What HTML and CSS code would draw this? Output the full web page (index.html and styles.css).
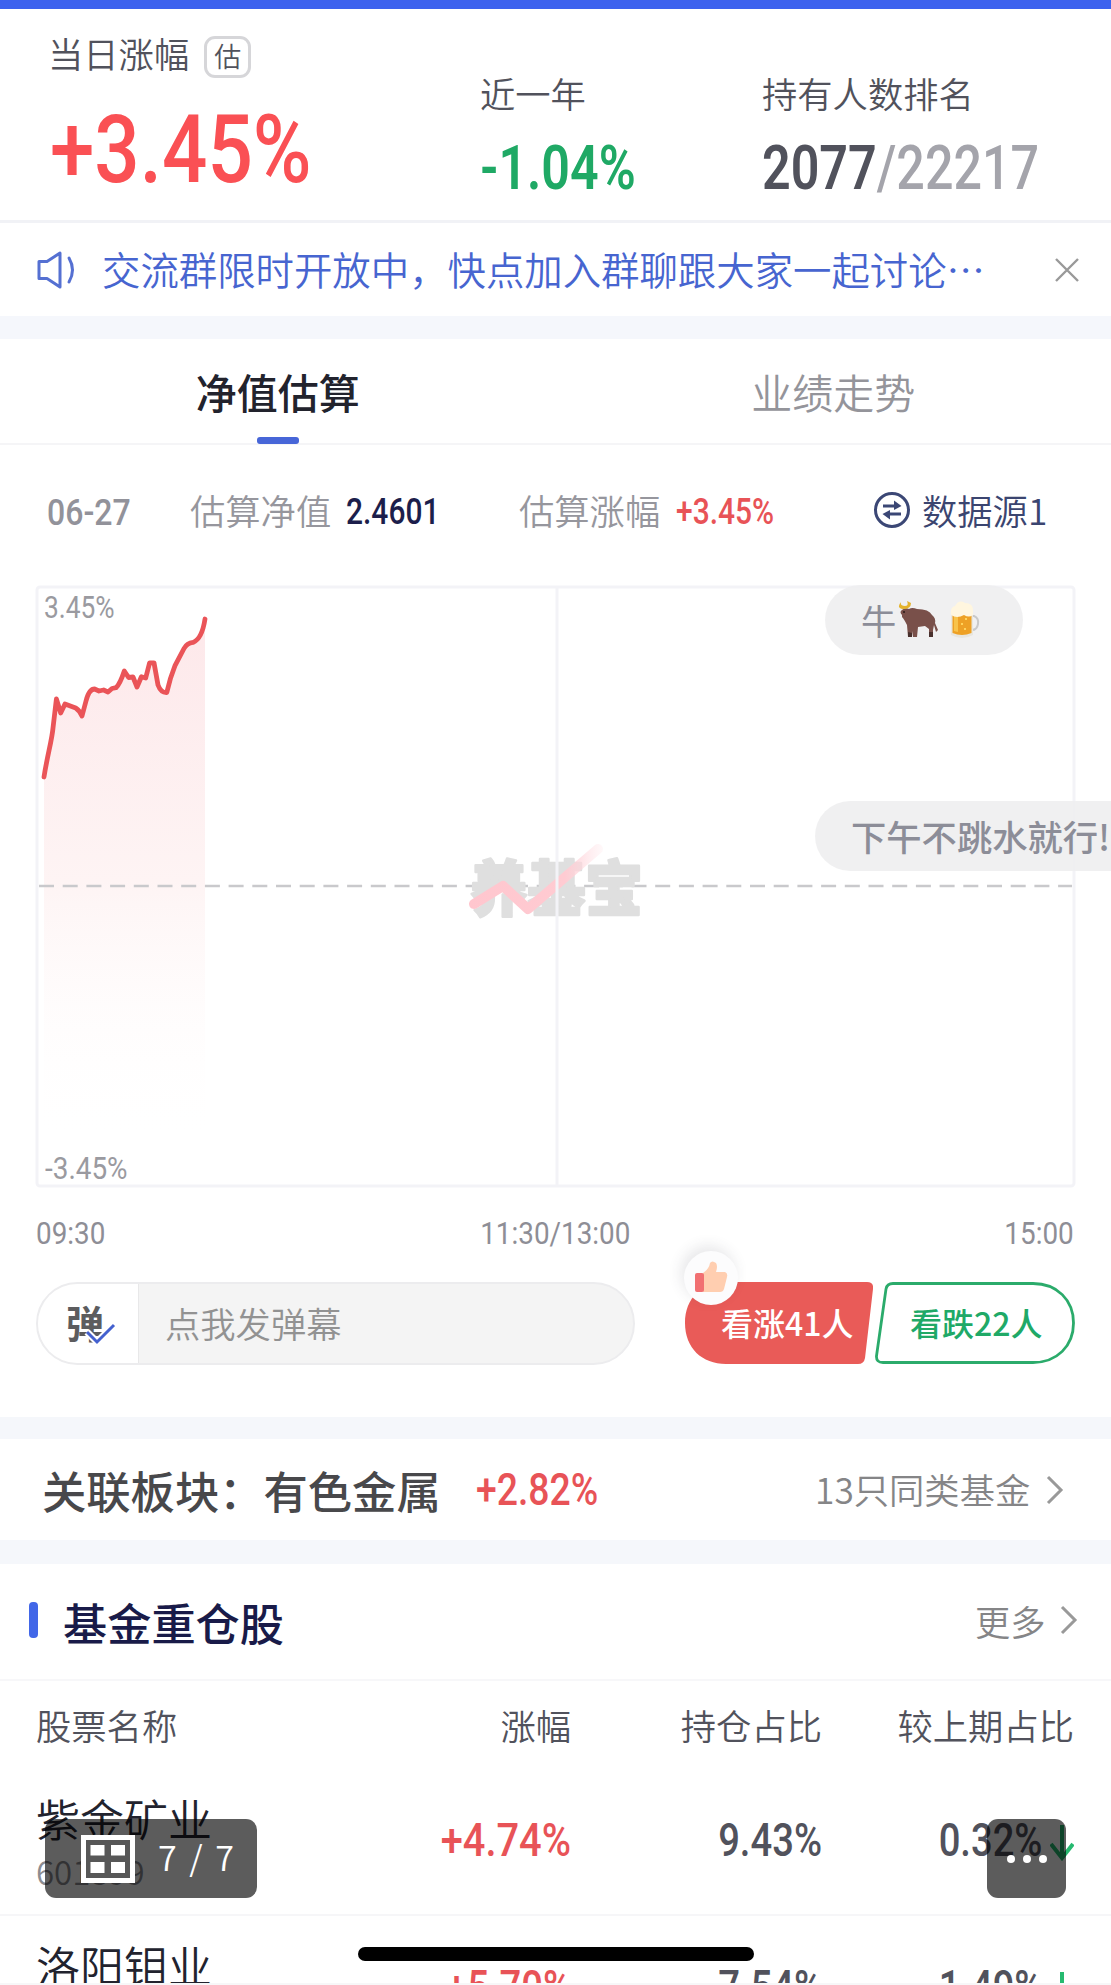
FILE: index.html
```html
<!DOCTYPE html>
<html lang="zh-CN">
<head>
<meta charset="utf-8">
<title>基金详情</title>
<link rel="stylesheet" href="styles.css">
</head>
<body>
<main class="page">
  <header class="summary">
    <div class="stat stat-day">
      <div class="label">当日涨幅<span class="badge">估</span></div>
      <div class="num big up">+3.45%</div>
    </div>
    <div class="stat">
      <div class="label">近一年</div>
      <div class="num mid down">-1.04%</div>
    </div>
    <div class="stat">
      <div class="label">持有人数排名</div>
      <div class="num mid rank">2077<span class="total">/22217</span></div>
    </div>
  </header>

  <section class="notice">
    <svg class="speaker" viewBox="0 0 42 40" fill="none" stroke="#5570d2" stroke-width="3" stroke-linejoin="round" stroke-linecap="round"><path d="M3 11.500h8L24 3v34l-13-8.500H3z"/><path d="M33 8q7 12 0 24"/></svg>
    <p>交流群限时开放中，快点加入群聊跟大家一起讨论…</p>
    <svg class="close" viewBox="0 0 24 24" stroke="#999" stroke-width="2.400"><path d="M1 1l22 22M23 1L1 23"/></svg>
  </section>

  <nav class="tabs">
    <a class="tab active">净值估算</a>
    <a class="tab">业绩走势</a>
  </nav>

  <section class="estimate">
    <div class="info">
      <span class="num date">06-27</span>
      <span class="key">估算净值</span><span class="num val nav">2.4601</span>
      <span class="key">估算涨幅</span><span class="num val up">+3.45%</span>
      <svg class="swap" viewBox="0 0 38 38" fill="none" stroke="#3b4775" stroke-width="3"><circle cx="19" cy="19" r="16.500"/><path d="M10 15h12M28 23H16" stroke-width="3"/><path d="M21 9.500l7.500 5.500-7.500 4zM17 28.500L9.500 23l7.500-4z" fill="#3b4775" stroke="none"/></svg>
      <span class="source">数据源1</span>
    </div>

    <div class="chart">
      <svg class="plot" viewBox="0 0 1111 604" fill="none">
        <defs>
          <linearGradient id="area" x1="0" y1="38" x2="0" y2="560" gradientUnits="userSpaceOnUse"><stop stop-color="#fde8ea"/><stop offset=".5" stop-color="#fef4f4"/><stop offset="1" stop-color="#fff" stop-opacity="0"/></linearGradient>
          <linearGradient id="trend" x1="470" y1="0" x2="605" y2="0" gradientUnits="userSpaceOnUse"><stop stop-color="#ffc6ce"/><stop offset=".7" stop-color="#ffcbd2"/><stop offset="1" stop-color="#ffe5e9" stop-opacity=".2"/></linearGradient>
        </defs>
        <path d="M44 196L53 147L56.400 118L60.700 132L65 123L75.700 128L82 135L86 120L90 111.600L94.600 108L108 111L116 106.700L119.600 102L124.300 90L128.600 96.500L133 96L137 106L141.400 95.700L145.700 97L149.600 81.800H154L158 104L162.500 110L166.800 111.600L175 84.700L184 67.500L193 61.400L201 51L205 38V560H44z" fill="url(#area)"/>
        <rect x="37" y="6" width="1037" height="599" rx="3" stroke="#f3f3f7" stroke-width="3"/>
        <path d="M39 305H1072" stroke="#c9c9cc" stroke-width="2.600" stroke-dasharray="15 8.700"/>
        <text class="watermark" x="470" y="330" textLength="173" lengthAdjust="spacingAndGlyphs">养基宝</text>
        <path d="M474 323L503 305L528 328L598 268" stroke="url(#trend)" stroke-width="10" stroke-linejoin="round" stroke-linecap="round"/>
        <path d="M557 6V605" stroke="#f3f3f7" stroke-width="3"/>
        <path d="M44 196C47 176 52 159 53 147L56.400 118L60.700 132L65 123L75.700 127Q80 130 82 135L86 120Q89 108 94.600 108L99 110L103.600 109L108 111L112 107.500L116 106.700Q120 103 124.300 90L128.600 96.500L133 96L137 106L141.400 95.700L145.700 97L149.600 81.800H154L158 104Q161 112 166.800 111.600Q170 97 175 84.700L184 67.500Q187 62 193 61.400Q202 58 205 38" stroke="#ea5458" stroke-width="4.800" stroke-linejoin="round" stroke-linecap="round"/>
      </svg>
      <span class="num axis top">3.45%</span>
      <span class="num axis bottom">-3.45%</span>
      <div class="bullet first">牛
        <svg class="bull" viewBox="0 0 42 38"><path d="M5 14Q2 11 5 9Q8 6 12 8Q15 6 20 8Q32 8 35 14Q39 17 38 22L41 29L39 31L37 24L36 29V36H32V28L28 25L21 26L20 36H16V30L15 36H11L10 24Q7 18 5 16z" fill="#79504a"/><path d="M4 1Q-1 7 6 8Q14 8 14 2L10 0Q12 5 8 5Q3 5 4 1z" fill="#e5b32b"/><path d="M11 31v5h4v-4zM32 31v5h4v-5z" fill="#49302d"/><circle cx="7" cy="11" r="1" fill="#2b1a18"/></svg>
        <svg class="beer" viewBox="0 0 32 38"><path d="M23 15h2q5 2 4 8t-6 6" fill="none" stroke="#c9c9ca" stroke-width="2"/><path d="M2 12h22v22q-11 6-22 0z" fill="#e8e6df"/><path d="M3.500 12h19v20q-9.500 4-19 0z" fill="#eea125"/><path d="M5 13h4v18l-4-1z" fill="#f8c34b"/><path d="M2 14Q1 6 6 5Q10-2 16 2Q24 2 24 9V14Q20 17 15 14Q8 18 2 14z" fill="#fff6df"/><path d="M12 22h2v2h-2zM16 17h2v2h-2zM15 27h2v2h-2z" fill="#ffd35c"/></svg>
      </div>
      <div class="bullet second">下午不跳水就行!</div>
    </div>

    <div class="times">
      <span class="num">09:30</span><span class="num">11:30/13:00</span><span class="num">15:00</span>
    </div>

    <div class="actions">
      <div class="composer">
        <div class="toggle">弹<svg viewBox="0 0 34 24" fill="none"><path d="M4 10l10 10L31 3" stroke="#fff" stroke-width="7"/><path d="M4 10l10 10L31 3" stroke="#4461cf" stroke-width="3"/></svg></div>
        <div class="placeholder">点我发弹幕</div>
      </div>
      <div class="vote rise">
        <svg class="shape" viewBox="0 0 188 82"><path d="M41 0H182Q189 0 188 7L180 76Q179 82 173 82H41C17 82 0 66 0 41S17 0 41 0z" fill="#e95b58"/></svg>
        <span>看涨41人</span>
        <div class="thumb"><svg viewBox="0 0 34 32"><path d="M9 12Q15 8 16 2Q18-1 22 2Q24 5 22 11H31Q34 12 33 16L30 28Q29 31 26 31H9z" fill="#ffceb0"/><rect x="1" y="12" width="9" height="19" rx="2" fill="#f17072"/></svg></div>
      </div>
      <div class="vote fall">
        <svg class="shape" viewBox="0 0 200 82"><path d="M18 1.500H158C182 1.500 198.500 18 198.500 41S182 80.500 158 80.500H8Q1 80.500 1.500 74L11 7Q12 1.500 18 1.500z" fill="#fff" stroke="#2bab6b" stroke-width="2.800"/></svg>
        <span>看跌22人</span>
      </div>
    </div>
  </section>

  <section class="related">
    <h2>关联板块：有色金属</h2>
    <span class="num up">+2.82%</span>
    <span class="link">13只同类基金</span>
    <svg class="chevron" viewBox="0 0 18 30" fill="none" stroke="#999" stroke-width="3"><path d="M2 2l13 13L2 28"/></svg>
  </section>

  <section class="holdings">
    <div class="title">
      <h2>基金重仓股</h2>
      <span class="link">更多</span>
      <svg class="chevron" viewBox="0 0 18 30" fill="none" stroke="#999" stroke-width="3"><path d="M2 2l13 13L2 28"/></svg>
    </div>
    <div class="row head"><span>股票名称</span><span>涨幅</span><span>持仓占比</span><span>较上期占比</span></div>
    <div class="row stock first-stock">
      <div class="name">紫金矿业<small>601899</small></div>
      <span class="num up">+4.74%</span><span class="num">9.43%</span><span class="num">0.32%</span>
      <svg class="arrow" viewBox="0 0 24 36" fill="none" stroke="#26ba70" stroke-width="4"><path d="M12 0v33M1 19l11 14 11-14"/></svg>
    </div>
    <div class="row stock">
      <div class="name">洛阳钼业<small>603993</small></div>
      <span class="num up">+5.70%</span><span class="num">7.54%</span><span class="num">1.49%</span>
      <svg class="arrow" viewBox="0 0 24 36" fill="none" stroke="#26ba70" stroke-width="4"><path d="M12 0v33M1 19l11 14 11-14"/></svg>
    </div>
  </section>

  <div class="pager"><svg viewBox="0 0 54 48"><path d="M0 0h54v48H0z" fill="#fff"/><path d="M5 5h44v38H5z" fill="#575757"/><path d="M9.500 10H23.500V20.500H9.500zM30 10H44V20.500H30zM9.500 27H23.500V38H9.500zM30 27H44V38H30z" fill="#fff"/></svg><span>7 / 7</span></div>
  <div class="more"><i></i><i></i><i></i></div>
  <div class="home"></div>
</main>
</body>
</html>
```
FILE: styles.css
```css
* { box-sizing: border-box; }
body { margin: 0; background: #fff; }
.page {
  position: relative; width: 1111px; height: 1985px; overflow: hidden;
  display: flex; flex-direction: column;
  border-top: 9px solid #3d62ee; border-bottom: 2px solid #f7f7f8;
  font-family: "Noto Sans CJK SC", sans-serif; font-weight: 350; font-size: 35.300px; color: #51525c;
  white-space: nowrap;
}
h2, p { margin: 0; font-weight: 500; }
.page > * { flex: none; }
.num { font-family: Roboto, sans-serif; font-weight: 500; transform: scaleX(.83); transform-origin: left center; }
.up { color: #e85357; }
.down { color: #1fa965; }

.summary { height: 214px; border-bottom: 3px solid #f1f2f6; display: grid; grid-template-columns: 432px 282px 1fr; padding-left: 48px; }
.label { display: flex; align-items: center; height: 52px; line-height: 52px; }
.stat { padding-top: 58px; }
.stat-day { padding-top: 18px; }
.badge { width: 47px; height: 42px; margin: 8px 0 0 15px; border: 3px solid #d6d6d9; border-radius: 11px; font-size: 27px; line-height: 34px; text-align: center; }
.big { font-size: 94px; line-height: 94px; margin: 24px 0 0 2px; color: #fa5054; transform: scaleX(.85); }
.mid { font-size: 60.500px; line-height: 62px; margin-top: 19px; font-weight: 600; }
.total { color: #a4a4ab; font-weight: 500; }

.notice { height: 116px; border-bottom: 23px solid #f5f7fc; display: flex; align-items: center; padding-left: 36px; color: #4765d0; font-size: 38.400px; }
.notice p { width: 930px; margin-left: 24px; padding-bottom: 4px; font-weight: 350; }
.speaker { width: 42px; height: 40px; }
.close { width: 24px; height: 24px; margin-left: 23px; }

.tabs { display: grid; grid-template-columns: 1fr 1fr; height: 106px; border-bottom: 2px solid #f5f5f7; }
.tab { position: relative; text-align: center; font-size: 41px; line-height: 104px; color: #94949a; }
.active { color: #22232d; font-weight: 500; }
.active::after { content: ""; position: absolute; left: 257px; bottom: -1px; width: 42px; height: 7px; border-radius: 3px; background: #4766d8; }

.tab { height: 104px; }
.estimate { height: 972px; }
.info { height: 135px; display: grid; grid-template-columns: 143px 156px 173px 157px 197px 49px 1fr; align-items: center; padding: 0 0 5px 47px; }
.key { color: #96969d; padding-bottom: 2px; }
.date { font-size: 36px; color: #92929a; padding-top: 5px; transform: scaleX(.89); }
.val { font-size: 37px; transform: scaleX(.81); padding-top: 2px; }
.nav { color: #1c1e4b; }
.swap { width: 38px; height: 38px; }
.source { color: #3b4570; padding-bottom: 2px; }

.chart { position: relative; height: 604px; }
.plot { display: block; width: 1111px; height: 606px; overflow: visible; }
.watermark { font-family: "Noto Sans CJK SC", sans-serif; font-weight: 900; font-size: 60px; fill: #dfdfdf; stroke: #dfdfdf; stroke-width: 2.500px; stroke-linejoin: round; }
.axis { position: absolute; left: 44px; font-size: 31px; line-height: 36px; font-weight: 400; color: #9a9aa0; transform: scaleX(.85); }
.axis.top { top: 10px; }
.axis.bottom { bottom: -3px; left: 45px; transform: scaleX(.9); }
.bullet { position: absolute; height: 70px; border-radius: 35px; background: rgba(238, 238, 239, .9); color: #8c8d98; line-height: 70px; padding-left: 36px; }
.bullet.first { left: 825px; top: 5px; width: 198px; display: flex; align-items: center; font-weight: 400; }
.bullet.second { left: 815px; top: 221px; width: 330px; font-weight: 500; }
.bull { width: 42px; height: 38px; margin-left: 1px; }
.beer { width: 32px; height: 38px; margin-left: 10px; }

.times { height: 98px; padding: 1px 37px 0 36px; display: flex; justify-content: space-between; line-height: 96px; font-size: 32px; color: #8e8e96; }
.times .num { font-weight: 400; transform: scaleX(.87); }
.times .num:nth-child(2) { transform-origin: center; }
.times .num:last-child { transform-origin: right; }

.actions { display: flex; height: 83px; padding-left: 36px; }
.composer { display: flex; width: 599px; height: 83px; margin-right: 50px; border: 2px solid #ececee; border-radius: 42px; overflow: hidden; background: #f4f4f4; }
.toggle { position: relative; width: 101px; border-right: 1px solid #e8e8e9; background: #fff; padding-left: 28px; font-size: 38px; font-weight: 700; line-height: 76px; color: #5c5c5e; }
.toggle svg { position: absolute; left: 45px; top: 38px; width: 34px; height: 24px; }
.placeholder { padding-left: 26px; line-height: 77px; color: #929292; }
.vote { position: relative; height: 82px; font-size: 32px; font-weight: 500; line-height: 81px; }
.vote span { position: relative; }
.shape { position: absolute; left: 0; top: 0; width: 100%; height: 100%; }
.rise { width: 188px; margin-right: 2px; padding-left: 36px; color: #fff; }
.fall { width: 200px; padding-left: 35px; color: #20a967; }
.thumb { position: absolute; left: -1px; top: -31px; width: 54px; height: 54px; border-radius: 50%; background: #fcfcfd; box-shadow: -3px -5px 14px rgba(60, 60, 70, .12); }
.thumb svg { position: absolute; left: 10px; top: 10px; width: 34px; height: 32px; }

.related { height: 147px; border: solid #f5f7fb; border-width: 22px 0 24px; display: flex; align-items: center; padding-left: 42px; }
.related h2 { width: 434px; font-size: 44.300px; color: #48484b; }
.related .num { width: 339px; font-size: 45px; }
.link { color: #858587; padding-bottom: 3px; }
.chevron { width: 18px; height: 30px; }
.related .link { width: 231px; }

.title { height: 117px; border-bottom: 2px solid #f7f7f9; display: flex; align-items: center; padding-left: 29px; }
.title::before { content: ""; width: 9px; height: 36px; border-radius: 4px; background: #4267e8; margin-top: -3px; }
.title h2 { width: 912px; margin-left: 25px; font-size: 44.200px; color: #191b49; }
.title .link { width: 85px; }
.title .chevron { margin-top: -3px; }
.row { display: grid; grid-template-columns: 235px 300px 251px 252px; padding-left: 36px; align-items: center; }
.row > span { text-align: right; }
.head { height: 88px; line-height: 86px; }
.row.head > span:first-child { text-align: left; }
.stock { position: relative; height: 147px; border-bottom: 2px solid #f6f6f8; }
.stock .num { font-size: 46px; line-height: 54px; padding-bottom: 3px; transform-origin: right center; }
.first-stock .up { transform: scaleX(.865); }
.stock .num:nth-child(4) { padding-right: 38px; }
.name { font-size: 44px; line-height: 54px; padding-top: 6px; color: #22232e; }
.name small { display: block; font-size: 33px; line-height: 53px; color: #8c8c91; }
.arrow { position: absolute; left: 1050px; top: 56px; width: 24px; height: 36px; }

.pager { position: absolute; left: 45px; top: 1810px; width: 212px; height: 79px; border-radius: 11px; background: rgba(0, 0, 0, .64); display: flex; align-items: center; padding-left: 36px; color: #fff; font-size: 34px; }
.pager svg { width: 54px; height: 48px; }
.pager span { margin-left: 23px; padding-bottom: 4px; letter-spacing: 2.500px; }
.more { position: absolute; left: 987px; top: 1810px; width: 79px; height: 79px; border-radius: 11px; background: rgba(0, 0, 0, .64); display: flex; align-items: center; justify-content: center; gap: 8px; }
.more i { width: 8px; height: 8px; border-radius: 50%; background: #fff; }
.home { position: absolute; left: 358px; top: 1938px; width: 396px; height: 14px; border-radius: 7px; background: #000; }
```
